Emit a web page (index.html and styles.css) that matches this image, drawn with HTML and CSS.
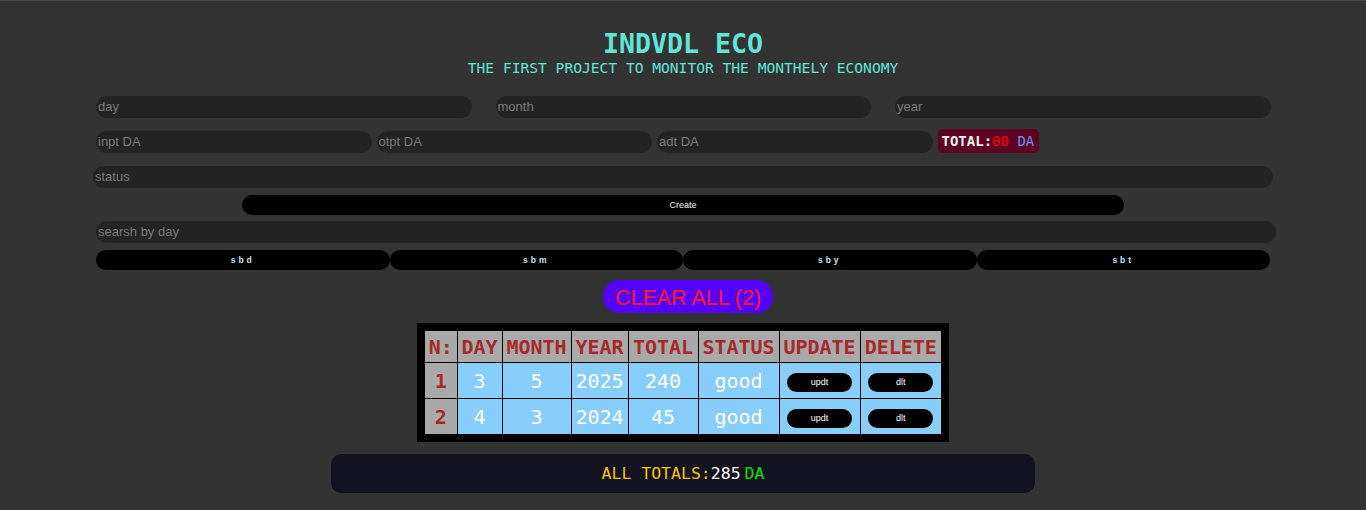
FILE: index.html
```html
<!DOCTYPE html>
<html>
<head>
<meta charset="utf-8">
<link rel="stylesheet" href="styles.css">
</head>
<body>
<div class="page">
  <header class="head">
    <h1 class="title">INDVDL ECO</h1>
    <p class="subtitle">THE FIRST PROJECT TO MONITOR THE MONTHELY ECONOMY</p>
  </header>

  <div class="row row-date">
    <input class="field w375" placeholder="day">
    <input class="field w375" placeholder="month">
    <input class="field w375" placeholder="year">
  </div>

  <div class="row row-money">
    <input class="field w275" placeholder="inpt DA">
    <input class="field w275" placeholder="otpt DA">
    <input class="field w275" placeholder="adt DA">
    <div class="total">TOTAL:<span class="red">00</span> <span class="blue">DA</span></div>
  </div>

  <div class="row row-status">
    <input class="field status" placeholder="status">
  </div>

  <div class="row row-create">
    <button class="create">Create</button>
  </div>

  <div class="row row-search">
    <input class="field search" placeholder="searsh by day">
  </div>

  <div class="row row-sb">
    <button class="sb">sbd</button>
    <button class="sb">sbm</button>
    <button class="sb">sby</button>
    <button class="sb">sbt</button>
  </div>

  <div class="row row-clear">
    <button class="clear">CLEAR ALL (2)</button>
  </div>

  <div class="row row-table">
    <table class="data">
      <colgroup>
        <col class="c1"><col class="c2"><col class="c3"><col class="c4"><col class="c5"><col class="c6"><col class="c7"><col class="c8">
      </colgroup>
      <thead>
        <tr><th>N:</th><th>DAY</th><th>MONTH</th><th>YEAR</th><th>TOTAL</th><th>STATUS</th><th>UPDATE</th><th>DELETE</th></tr>
      </thead>
      <tbody>
        <tr><th>1</th><td>3</td><td>5</td><td>2025</td><td>240</td><td>good</td><td><button class="act">updt</button></td><td><button class="act">dlt</button></td></tr>
        <tr><th>2</th><td>4</td><td>3</td><td>2024</td><td>45</td><td>good</td><td><button class="act">updt</button></td><td><button class="act">dlt</button></td></tr>
      </tbody>
    </table>
  </div>

  <div class="row row-all">
    <div class="all"><span class="gold">ALL TOTALS:</span><span class="white">285</span><span class="green">DA</span></div>
  </div>
</div>
</body>
</html>
```

FILE: styles.css
```css
html, body {
  margin: 0;
  padding: 0;
  background: #333333;
  height: 100%;
}
body {
  border-top: 1px solid #474747;
  box-sizing: border-box;
  overflow: hidden;
}
.page {
  width: 1366px;
  display: flex;
  flex-direction: column;
}
.head {
  text-align: center;
  color: #5ee6d6;
  font-family: "DejaVu Sans Mono", monospace;
  margin-top: 27px;
}
.title {
  margin: 0;
  font-size: 26.6px;
  line-height: 31px;
  font-weight: bold;
}
.subtitle {
  margin: 0;
  font-size: 14.6px;
  line-height: 17px;
}
.row {
  display: flex;
}
.field {
  box-sizing: border-box;
  height: 22px;
  border: none;
  outline: none;
  border-radius: 11px;
  background: #242424;
  color: #ddd;
  font-family: "Liberation Sans", Arial, sans-serif;
  font-size: 13px;
  padding: 0 2px 1px;
  margin: 0;
}
.field::placeholder {
  color: #7a7a7a;
}
.row-date {
  margin-top: 20px;
  padding-left: 96px;
  gap: 24px;
}
.w375 { width: 375.5px; }
.row-money {
  margin-top: 13px;
  padding-left: 96px;
  gap: 5px;
}
.w275 { width: 275.5px; }
.total {
  height: 24px;
  margin-top: -2px;
  width: 101px;
  box-sizing: border-box;
  background: #5e0423;
  border-radius: 5px;
  color: #f2f2f2;
  font-family: "DejaVu Sans Mono", monospace;
  font-weight: bold;
  font-size: 14px;
  line-height: 24px;
  padding-left: 4px;
  white-space: nowrap;
}
.total .red { color: #ff0000; font-weight: normal; }
.total .blue { color: #6f8ff0; font-weight: normal; }
.row-status {
  margin-top: 13px;
  padding-left: 93px;
}
.status { width: 1180px; }
.row-create {
  margin-top: 7px;
  justify-content: center;
}
.create {
  width: 882px;
  height: 20px;
  border: none;
  border-radius: 10px;
  background: #000;
  color: #f4f4f4;
  font-family: "Liberation Sans", Arial, sans-serif;
  font-size: 9px;
  padding: 0;
}
.row-search {
  margin-top: 6px;
  padding-left: 96px;
}
.search { width: 1180px; }
.row-sb {
  margin-top: 7px;
  padding-left: 96px;
}
.sb {
  width: 293.5px;
  height: 20px;
  border: none;
  border-radius: 10px;
  background: #000;
  color: #cfe0ee;
  font-family: "Liberation Sans", Arial, sans-serif;
  font-weight: bold;
  font-size: 8.5px;
  letter-spacing: 3px;
  padding: 0;
}
.row-clear {
  margin-top: 10px;
  justify-content: center;
  padding-left: 10px;
}
.clear {
  width: 170px;
  height: 33px;
  border: none;
  border-radius: 16px;
  background: #5500ff;
  color: #ff1a1a;
  font-family: "Liberation Sans", Arial, sans-serif;
  font-size: 21.5px;
  padding: 3px 0 0;
}
.row-table {
  margin-top: 10px;
  justify-content: center;
}
.data {
  border-collapse: collapse;
  border: 8px solid #000;
  table-layout: fixed;
  font-family: "DejaVu Sans Mono", monospace;
  font-size: 20px;
}
.c1 { width: 36px; }
.c2 { width: 45px; }
.c3 { width: 69px; }
.c4 { width: 57px; }
.c5 { width: 70px; }
.c6 { width: 81px; }
.c7 { width: 81px; }
.c8 { width: 85px; }
.data th, .data td {
  border: 1px solid #000;
  padding: 0;
  text-align: center;
  white-space: nowrap;
  overflow: hidden;
}
.data thead th {
  background: #a9a9a9;
  color: #a52a2a;
  font-weight: bold;
  height: 31px;
}
.data tbody th {
  background: #a9a9a9;
  color: #a52a2a;
  font-weight: bold;
  height: 35px;
}
.data tbody td {
  background: #87cefa;
  color: #ffffff;
  font-weight: normal;
}
.act {
  width: 65px;
  height: 19px;
  border: none;
  border-radius: 10px;
  background: #000;
  color: #fff;
  font-family: "Liberation Sans", Arial, sans-serif;
  font-size: 9px;
  padding: 0;
  vertical-align: middle;
}
.row-all {
  margin-top: 12px;
  justify-content: center;
}
.all {
  width: 704px;
  height: 39px;
  background: #121221;
  border-radius: 10px;
  text-align: center;
  line-height: 39px;
  font-family: "DejaVu Sans Mono", monospace;
  font-size: 16.5px;
  white-space: nowrap;
}
.gold { color: #f5c400; }
.white { color: #ffffff; }
.green { color: #00e800; margin-left: 4px; }
```
